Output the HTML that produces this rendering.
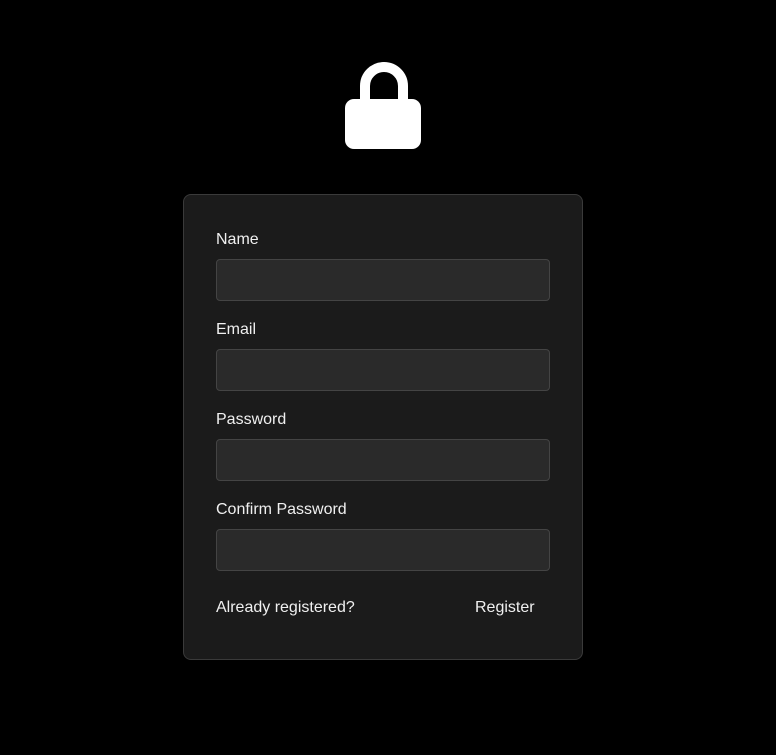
<!DOCTYPE html><html><head><style>
body{margin:0;background:#000;width:776px;height:755px;font-family:"Liberation Sans",sans-serif;position:relative}
.card{position:absolute;left:183px;top:194px;width:398px;height:464px;background:#1b1b1b;border:1px solid #3a3a3a;border-radius:8px;box-sizing:content-box}
label{position:absolute;left:32px;color:#f0f0f0;font-size:16px}
.in{position:absolute;left:32px;width:332px;height:40px;background:#2a2a2a;border:1px solid #444;border-radius:4px}
.t{position:absolute;color:#f0f0f0;font-size:16px;top:404px}
</style></head><body>
<svg style="position:absolute;left:0;top:0" width="776" height="160"><path d="M365 102 V86 A19 19 0 0 1 403 86 V102" fill="none" stroke="#fff" stroke-width="10"/><rect x="345" y="99" width="76" height="50" rx="9" fill="#fff"/></svg>
<div class="card">
<label style="top:36px">Name</label><div class="in" style="top:64px"></div>
<label style="top:126px">Email</label><div class="in" style="top:154px"></div>
<label style="top:216px">Password</label><div class="in" style="top:244px"></div>
<label style="top:306px">Confirm Password</label><div class="in" style="top:334px"></div>
<div class="t" style="left:32px">Already registered?</div>
<div class="t" style="left:291px">Register</div>
</div>
</body></html>
